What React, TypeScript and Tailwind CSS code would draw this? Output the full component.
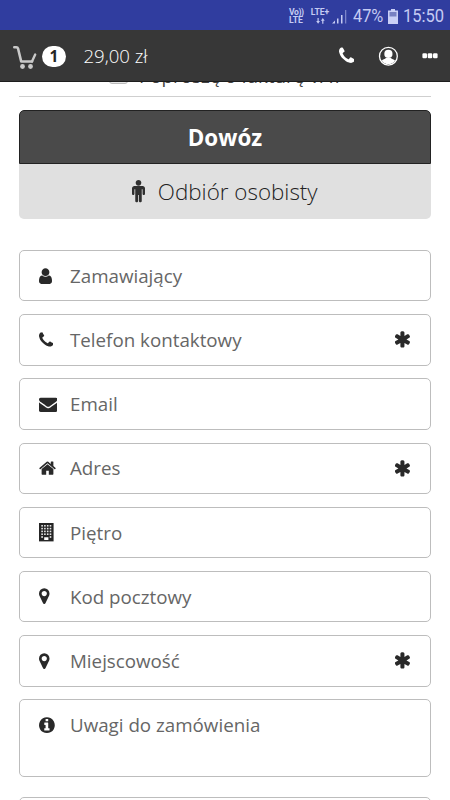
import React from "react";

type Glyph = { box: string; d: string; w: number };

const glyphs: Record<string, Glyph> = {
  user: {
    box: "256 0 1280 1792",
    w: 13,
    d: "M1536 1399q0 109-62.5 187t-150.5 78h-854q-88 0-150.5-78t-62.5-187q0-85 8.5-160.5t31.5-152 58.5-131 94-89 134.5-34.5q131 128 313 128t313-128q76 0 134.5 34.5t94 89 58.5 131 31.5 152 8.5 160.5zm-256-887q0 159-112.5 271.5t-271.5 112.5-271.5-112.5-112.5-271.5 112.5-271.5 271.5-112.5 271.5 112.5 112.5 271.5z",
  },
  phone: {
    box: "192 0 1408 1792",
    w: 14.3,
    d: "M1600 1240q0 27-10 70.5t-21 68.5q-21 50-122 106-94 51-186 51-27 0-53-3.5t-57.5-12.5-47-14.5-55.5-20.5-49-18q-98-35-175-83-127-79-264-216t-216-264q-48-77-83-175-3-9-18-49t-20.5-55.5-14.5-47-12.5-57.5-3.5-53q0-92 51-186 56-101 106-122 25-11 68.5-21t70.5-10q14 0 21 3 18 6 53 76 11 19 30 54t35 63.5 31 53.5q3 4 17.5 25t21.5 35.5 7 28.5q0 20-28.5 50t-62 55-62 53-28.5 46q0 9 5 22.5t8.5 20.5 14 24 11.5 19q76 137 174 235t235 174q2 1 19 11.5t24 14 20.5 8.5 22.5 5q18 0 46-28.5t53-62 55-62 50-28.5q14 0 28.5 7t35.5 21.5 25 17.5q25 15 53.5 31t63.5 35 54 30q70 35 76 53 3 7 3 21z",
  },
  envelope: {
    box: "0 0 1792 1792",
    w: 18.4,
    d: "M1792 710v794q0 66-47 113t-113 47h-1472q-66 0-113-47t-47-113v-794q44 49 101 87 362 246 497 345 57 42 92.5 65.5t94.5 48 110 24.5h2q51 0 110-24.5t94.5-48 92.5-65.5q170-123 498-345 57-39 100-87zm0-294q0 79-49 151t-122 123q-376 261-468 325-10 7-42.5 31t-54 38.5-52 32.5-57.5 27-50 9h-2q-23 0-50-9t-57.5-27-52-32.5-54-38.5-42.5-31q-91-64-262-182.5t-205-142.5q-62-42-117-115.5t-55-136.5q0-78 41.5-130t118.5-52h1472q65 0 112.5 47t47.5 113z",
  },
  home: {
    box: "64 0 1664 1792",
    w: 17,
    d: "M1472 992v480q0 26-19 45t-45 19h-384v-384h-256v384h-384q-26 0-45-19t-19-45v-480q0-1 .5-3t.5-3l575-474 575 474q1 2 1 6zm223-69l-62 74q-8 9-21 11h-3q-13 0-21-7l-692-577-692 577q-12 8-24 7-13-2-21-11l-62-74q-8-10-7-23.5t11-21.5l719-599q32-26 76-26t76 26l244 204v-195q0-14 9-23t23-9h192q14 0 23 9t9 23v408l219 182q10 8 11 21.5t-7 23.5z",
  },
  marker: {
    box: "384 0 1024 1792",
    w: 10.5,
    d: "M1152 640q0-106-75-181t-181-75-181 75-75 181 75 181 181 75 181-75 75-181zm256 0q0 109-33 179l-364 774q-16 33-47.5 52t-67.5 19-67.5-19-46.5-52l-365-774q-33-70-33-179 0-212 150-362t362-150 362 150 150 362z",
  },
  info: {
    box: "128 0 1536 1792",
    w: 15.8,
    d: "M1152 1376v-160q0-14-9-23t-23-9h-96v-512q0-14-9-23t-23-9h-320q-14 0-23 9t-9 23v160q0 14 9 23t23 9h96v320h-96q-14 0-23 9t-9 23v160q0 14 9 23t23 9h448q14 0 23-9t9-23zm-128-896v-160q0-14-9-23t-23-9h-192q-14 0-23 9t-9 23v160q0 14 9 23t23 9h192q14 0 23-9t9-23zm640 416q0 209-103 385.5t-279.5 279.5-385.5 103-385.5-103-279.5-279.5-103-385.5 103-385.5 279.5-279.5 385.5-103 385.5 103 279.5 279.5 103 385.5z",
  },
  asterisk: {
    box: "128 0 1536 1792",
    w: 16.2,
    d: "M1482 1050q46 26 59.5 77.5t-12.5 97.5l-64 110q-26 46-77.5 59.5t-97.5-12.5l-266-153v307q0 52-38 90t-90 38h-128q-52 0-90-38t-38-90v-307l-266 153q-46 26-97.5 12.5t-77.5-59.5l-64-110q-26-46-12.5-97.5t59.5-77.5l266-154-266-154q-46-26-59.5-77.5t12.5-97.5l64-110q26-46 77.5-59.5t97.5 12.5l266 153v-307q0-52 38-90t90-38h128q52 0 90 38t38 90v307l266-153q46-26 97.5-12.5t77.5 59.5l64 110q26 46 12.5 97.5t-59.5 77.5l-266 154z",
  },
  male: {
    box: "384 0 1024 1792",
    w: 13,
    d: "M1408 672v416q0 40-28 68t-68 28-68-28-28-68v-352h-64v912q0 46-33 79t-79 33-79-33-33-79v-464h-64v464q0 46-33 79t-79 33-79-33-33-79v-912h-64v352q0 40-28 68t-68 28-68-28-28-68v-416q0-80 56-136t136-56h640q80 0 136 56t56 136zm-288-448q0 93-65.5 158.5t-158.5 65.5-158.5-65.5-65.5-158.5 65.5-158.5 158.5-65.5 158.5 65.5 65.5 158.5z",
  },
};

function Icon({ name, className = "" }: { name: string; className?: string }) {
  const g = glyphs[name];
  return (
    <svg viewBox={g.box} width={g.w} className={className} fill="currentColor" aria-hidden="true">
      <path d={g.d} />
    </svg>
  );
}

function Building() {
  return (
    <svg viewBox="0 0 14.6 18.4" width="14.6" height="18.4" aria-hidden="true">
      <path d="M0 0h14.600v18.400H0z" fill="#252525" />
      {[2, 4.8, 7.6, 10.4].map((y) =>
        [2.3, 5.1, 7.9, 10.7].map((x) => (
          <rect key={`${x}-${y}`} x={x} y={y} width="1.6" height="1.6" fill="#e8e8e8" />
        ))
      )}
      <path d="M2.300 13.200h1.600v1.600H2.300zM10.700 13.200h1.600v1.600h-1.600zM5.200 14.300h4.200v2.800H5.200z" fill="#fff" />
    </svg>
  );
}

const fields = [
  { icon: "user", label: "Zamawiający", required: false },
  { icon: "phone", label: "Telefon kontaktowy", required: true },
  { icon: "envelope", label: "Email", required: false },
  { icon: "home", label: "Adres", required: true },
  { icon: "building", label: "Piętro", required: false },
  { icon: "marker", label: "Kod pocztowy", required: false },
  { icon: "marker", label: "Miejscowość", required: true },
];

function StatusBar() {
  return (
    <div className="flex h-[30px] items-center justify-end bg-[#303d9f] pr-[6px] pt-[2px] font-[Roboto,sans-serif] text-[#c5cbf3]">
      <div className="mr-[5px] flex w-4 flex-col text-[8.600px] leading-[8.500px] font-bold">
        <span className="tracking-[-0.400px]">Vo))</span>
        <span>LTE</span>
      </div>
      <div className="mr-[2px] flex w-5 flex-col items-center">
        <span className="text-[8.600px] leading-[9px] font-bold">LTE+</span>
        <svg width="9" height="6" viewBox="0 0 9 6" fill="currentColor" className="mt-px">
          <path d="M1.500 0h1.200v3H4L2.100 5.800.2 3h1.300zM6.200 5.800h1.200V2.800h1.300L6.800 0 4.900 2.800h1.300z" />
        </svg>
      </div>
      <svg width="15" height="15" viewBox="0 0 15 15" className="mr-[6px]" fill="currentColor">
        <path d="M0 14.500 3 11.500v3zM5 9.500h1.500v5H5zM9 6h1.500v8.500H9z" />
        <path d="M13 1h1.300v13.500H13z" opacity=".5" />
      </svg>
      <span className="w-[30px] origin-left scale-x-[0.860] text-[19px] leading-5 whitespace-nowrap">47%</span>
      <svg width="10" height="15" viewBox="0 0 10 15" className="ml-[5px] mr-[5px]">
        <path d="M3 0h4v1.500h3V15H0V1.500h3z" fill="#c9cff6" />
        <path d="M1.500 3h7v4.500h-7z" fill="#7780c2" />
      </svg>
      <span className="w-[41px] origin-left scale-x-[0.870] text-[19px] leading-5 whitespace-nowrap">15:50</span>
    </div>
  );
}

function Header() {
  return (
    <header className="flex h-[52px] items-center border-b border-[#1d1d1d] bg-[#373737] pl-[13px] pr-3 text-white">
      <svg width="24" height="24" viewBox="0 0 24 24" fill="none" stroke="#c9c9c9" className="mt-[3px]">
        <path d="M1.300 2.200h2c1 0 1.500.5 1.800 1.500l3.100 12.800h10.800" strokeWidth="2.600" strokeLinecap="round" strokeLinejoin="round" />
        <path d="M22.200 9.600l-3.200 6.900" strokeWidth="2.400" strokeLinecap="round" />
        <circle cx="9.500" cy="21.500" r="2.400" fill="#c9c9c9" stroke="none" />
        <circle cx="17.500" cy="21.500" r="2.400" fill="#c9c9c9" stroke="none" />
      </svg>
      <span className="ml-[5px] mt-px flex h-[21px] w-6 items-center justify-center rounded-full bg-white pt-[2px] text-[15.500px] font-bold text-[#252525]">
        1
      </span>
      <span className="ml-[17.500px] pt-px text-[18.600px] font-light">29,00 zł</span>
      <div className="ml-auto flex items-center">
        <Icon name="phone" className="mr-[24px] w-[15.500px]" />
        <svg width="20" height="20" viewBox="0 0 20 20" className="mr-6" fill="none">
          <circle cx="10.400" cy="10.200" r="8.900" stroke="#fff" strokeWidth="1.300" />
          <circle cx="10.400" cy="7.900" r="4.100" fill="#fff" />
          <path d="M3.700 14.800c1.300-1.500 3.300-1.800 4.200-2.800h5c.9 1 2.900 1.300 4.200 2.800a8.300 8.300 0 0 1-13.400 0z" fill="#fff" />
        </svg>
        <svg width="16" height="6" viewBox="0 0 16 6" fill="#fff">
          <rect width="4.600" height="5" y=".3" x=".4" rx="1.200" />
          <rect width="4.600" height="5" x="5.700" y=".3" rx="1.200" />
          <rect width="4.600" height="5" x="11" y=".3" rx="1.200" />
        </svg>
      </div>
    </header>
  );
}

export default function App() {
  return (
    <div className="flex h-[800px] w-[450px] flex-col overflow-hidden bg-white font-['Open_Sans',sans-serif]">
      <StatusBar />
      <Header />
      <main className="flex min-h-0 flex-1 flex-col overflow-hidden px-[19px]">
        <div className="-mt-[18px] flex h-[33px] shrink-0 items-start border-b border-[#cfcfcf] pl-[90px]">
          <span className="mt-px h-[19px] w-[19px] shrink-0 rounded-[3px] border border-[#bbb] bg-[#e6e6e6]" />
          <span className="-mt-px ml-[11px] whitespace-nowrap text-[18.750px] leading-[26px] text-[#444]">
            Poproszę o fakturę VAT
          </span>
        </div>

        <div className="mt-[13px] shrink-0 overflow-hidden rounded-[5px]">
          <div className="flex h-[54px] items-center justify-center rounded-t-[5px] border border-[#222] bg-[#4a4a4a] pt-px text-[22.400px] font-bold text-white">
            Dowóz
          </div>
          <div className="flex h-[54.500px] items-center justify-center bg-[#e0e0e0] pt-px text-[22.400px] font-light text-[#222]">
            <Icon name="male" className="mr-[12.500px] h-[22.800px] text-[#303030]" />
            <span>Odbiór osobisty</span>
          </div>
        </div>

        <form className="mt-[31.500px] flex shrink-0 flex-col gap-[12.800px]">
          {fields.map((f) => (
            <label
              key={f.label}
              className="flex h-[51.400px] items-center rounded-[5px] border border-[#bdbdbd] pl-[19px] pr-[19px] text-[#292929]"
            >
              <span className="flex w-[31px] shrink-0">
                {f.icon === "building" ? <Building /> : <Icon name={f.icon} />}
              </span>
              <span className="pt-[0.500px] text-[18.750px] text-[#666]">{f.label}</span>
              {f.required && <Icon name="asterisk" className="ml-auto" />}
            </label>
          ))}
          <label className="flex h-[78px] items-start rounded-[5px] border border-[#bdbdbd] pl-[19px] pt-[10.500px] text-[#292929]">
            <span className="flex h-[28px] w-[31px] shrink-0 items-center">
              <Icon name="info" />
            </span>
            <span className="text-[18.750px] leading-[28px] text-[#666]">Uwagi do zamówienia</span>
          </label>
          <div className="mt-[6.500px] h-[52px] rounded-[5px] border border-[#bdbdbd]" />
        </form>
      </main>
    </div>
  );
}
